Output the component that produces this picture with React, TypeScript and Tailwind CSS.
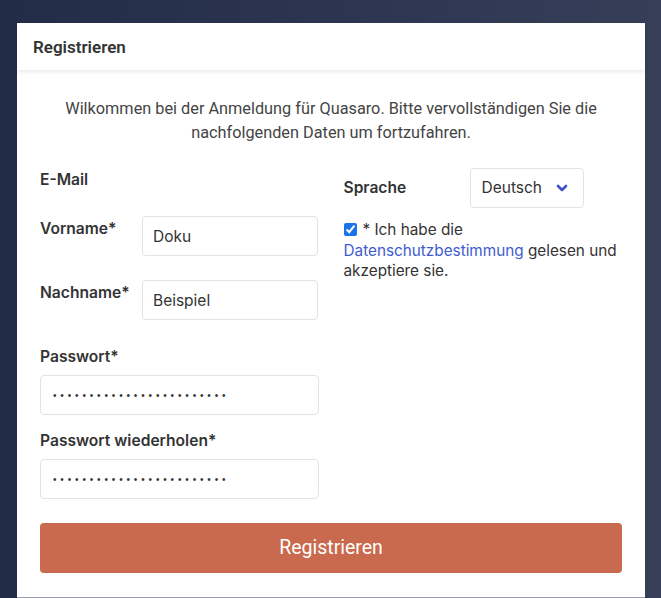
import React from "react";

const ui = { fontFamily: "Inter, 'Liberation Sans', sans-serif" };
const rob = { fontFamily: "Roboto, 'Liberation Sans', sans-serif" };

function TextInput({ value, className = "" }: { value: string; className?: string }) {
    return (
        <input
            type="text"
            value={value}
            readOnly
            className={`h-10 rounded border border-[#e3e3e3] bg-white px-[10px] text-[15.5px] text-[#333] outline-none ${className}`}
            style={ui}
        />
    );
}

function PasswordInput({ className = "" }: { className?: string }) {
    return (
        <input
            type="password"
            value="abcdefghijklmnopqrstuvwx"
            readOnly
            className={`h-10 rounded border border-[#e3e3e3] bg-white pl-[12px] pr-[10px] text-[10px] tracking-[3.85px] text-[#333] outline-none ${className}`}
            style={{ fontFamily: "'Liberation Sans', sans-serif" }}
        />
    );
}

const label = "text-[15.6px] font-semibold leading-5 text-[#333]";

export default function App() {
    return (
        <div className="h-[598px] w-[661px] overflow-hidden bg-gradient-to-r from-[#232c47] to-[#363e58] pt-[23px] pl-[17px]" style={ui}>
            <div className="flex h-[575px] w-[628px] flex-col bg-white border-b border-[#9c9ca8]">

                {/* ── Header ── */}
                <div className="relative flex h-[47px] items-center px-4 pt-[3px] shadow-[0_2px_4px_rgba(0,0,0,0.08)]">
                    <span className="text-[17px] font-semibold text-[#333]" style={rob}>Registrieren</span>
                </div>

                {/* ── Body ── */}
                <div className="px-[23px] pt-[27px]">
                    <p className="text-center text-[16.3px] leading-6 text-[#444]" style={rob}>
                        Wilkommen bei der Anmeldung für Quasaro. Bitte vervollständigen Sie die
                        <br />
                        nachfolgenden Daten um fortzufahren.
                    </p>

                    <div className="mt-[25px] grid grid-cols-2 gap-x-[25px]">
                        {/* left column */}
                        <div className="flex flex-col">
                            <div className={`h-5 ${label}`}>E-Mail</div>

                            <div className="mt-[26px] flex items-start">
                                <div className={`w-[102px] pt-[3px] ${label}`}>Vorname*</div>
                                <TextInput value="Doku" className="w-[176px]" />
                            </div>

                            <div className="mt-6 flex items-start">
                                <div className={`w-[102px] pt-[3px] ${label}`}>Nachname*</div>
                                <TextInput value="Beispiel" className="w-[176px]" />
                            </div>

                            <div className={`mt-[27px] h-5 ${label}`}>Passwort*</div>
                            <PasswordInput className="mt-[8px] w-full" />

                            <div className={`mt-[16px] h-5 ${label}`}>Passwort wiederholen*</div>
                            <PasswordInput className="mt-[8px] w-full" />
                        </div>

                        {/* right column */}
                        <div className="flex flex-col">
                            <div className="-mt-[2px] flex items-center">
                                <div className="w-[126px] text-[15.6px] font-semibold text-[#333]">Sprache</div>
                                <div className="flex h-10 w-[114px] items-center justify-between rounded border border-[#e3e3e3] pl-[11px] pr-[15px]">
                                    <span className="text-[15.5px] text-[#333]">Deutsch</span>
                                    <svg className="h-3 w-3 text-[#3f51c9]" viewBox="0 0 12 12" fill="none" stroke="currentColor" strokeWidth="2.6" strokeLinecap="round" strokeLinejoin="round">
                                        <path d="M2 4l4 4 4-4" />
                                    </svg>
                                </div>
                            </div>

                            <div className="mt-[12px] text-[15.3px] leading-[20.5px] text-[#333]">
                                <input type="checkbox" checked readOnly className="mr-[6px] h-[13px] w-[13px] align-[-1px] accent-[#1a73e8]" />
                                * Ich habe die
                                <br />
                                <span className="text-[#3f5bd0]">Datenschutzbestimmung</span> gelesen und
                                <br />
                                akzeptiere sie.
                            </div>
                        </div>
                    </div>

                    <button
                        className="mt-6 flex h-[50px] w-full items-center justify-center rounded bg-[#c96a4e] text-[19.5px] text-white"
                        style={rob}
                    >
                        Registrieren
                    </button>
                </div>
            </div>
        </div>
    );
}
